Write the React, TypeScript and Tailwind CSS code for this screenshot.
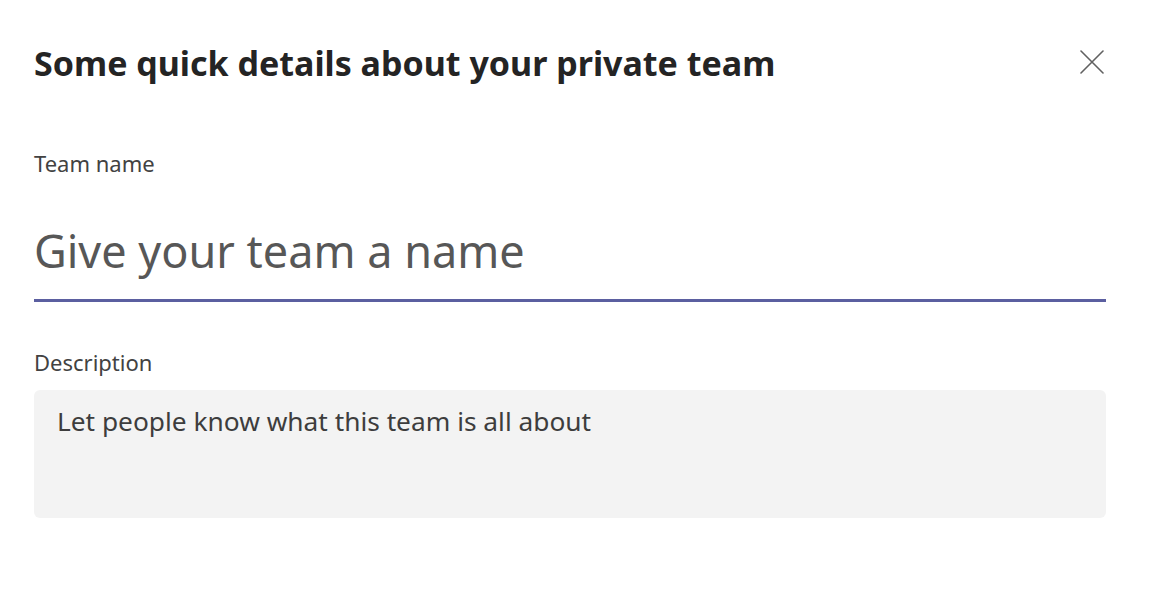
export default function App() {
  return (
    <div
      className="w-[1150px] h-[604px] bg-white pl-[34px] pr-[44px] pt-[38px]"
      style={{ fontFamily: '"Noto Sans", "Open Sans", sans-serif' }}
    >
      <div className="flex items-start justify-between">
        <h1 className="text-[34px] leading-[50px] font-bold text-[#242424]">
          Some quick details about your private team
        </h1>
        <button className="mt-[12px] mr-[2px] text-[#616161]">
          <svg width="24" height="24" viewBox="0 0 24 24" fill="none">
            <path
              d="M1 1 L23 23 M23 1 L1 23"
              stroke="currentColor"
              strokeWidth="1.6"
              strokeLinecap="round"
            />
          </svg>
        </button>
      </div>

      <div className="mt-[60px]">
        <label className="block text-[22px] leading-[30px] text-[#424242]">
          Team name
        </label>
        <div className="mt-[45px] border-b-[3px] border-[#5b5fa0] pb-[20px]">
          <input
            placeholder="Give your team a name"
            className="block w-full bg-transparent outline-none text-[45px] leading-[56px] h-[56px] placeholder:text-[#575757]"
          />
        </div>
      </div>

      <div className="mt-[45px]">
        <label className="block text-[22px] leading-[30px] text-[#424242]">
          Description
        </label>
        <textarea
          placeholder="Let people know what this team is all about"
          className="mt-[13px] block w-full h-[128px] resize-none rounded-[6px] bg-[#f3f3f3] px-[23px] pt-[14px] outline-none text-[26.3px] leading-[34px] placeholder:text-[#3d3d3d]"
        />
      </div>
    </div>
  );
}
